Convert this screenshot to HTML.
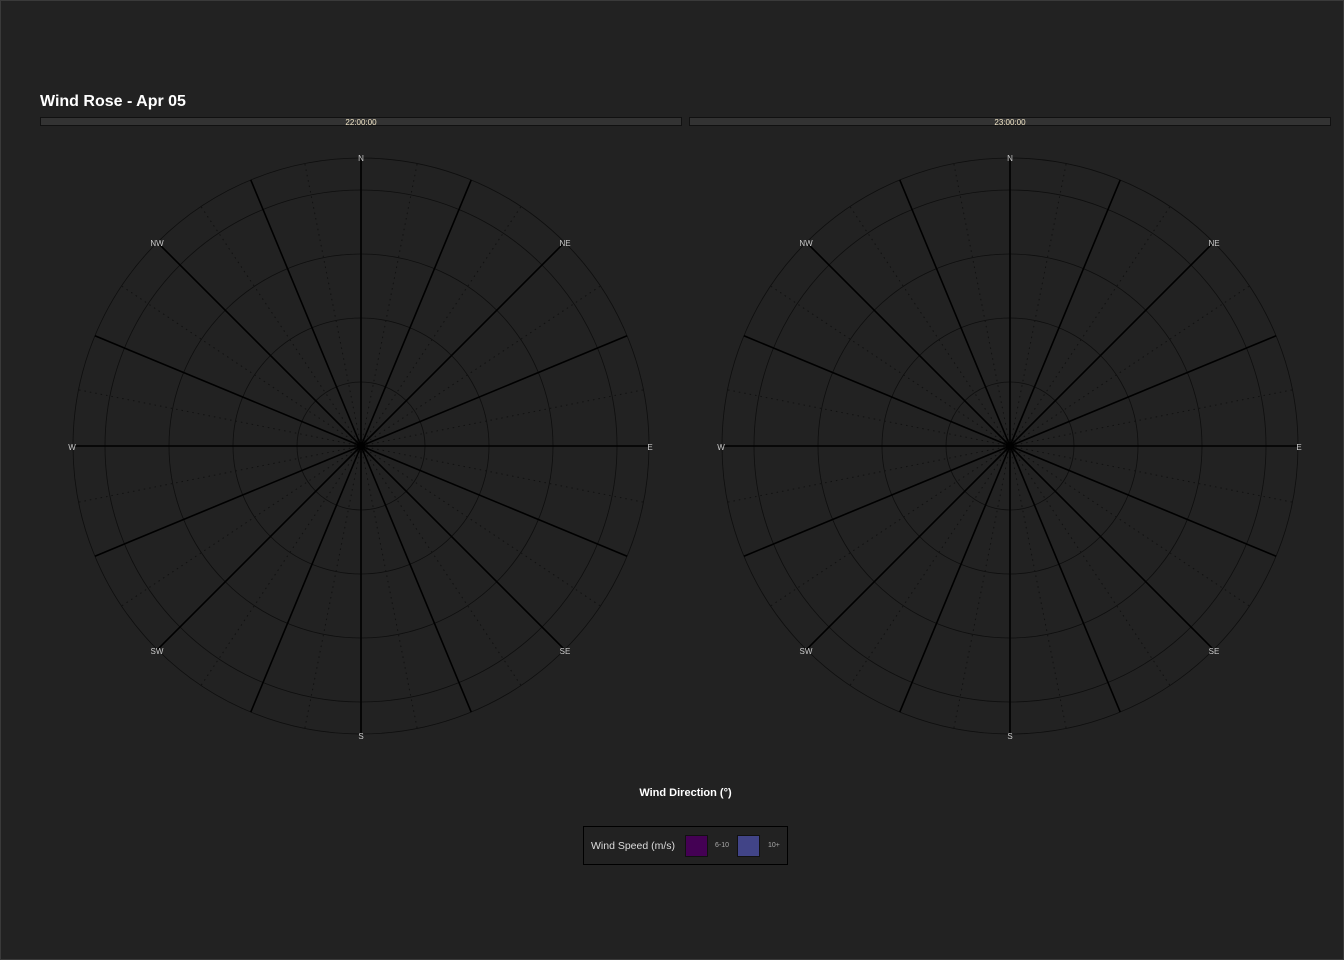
<!DOCTYPE html>
<html><head><meta charset="utf-8"><style>
html,body{margin:0;padding:0}
body{width:1344px;height:960px;background:#222;position:relative;overflow:hidden;font-family:"Liberation Sans",sans-serif;box-shadow:inset 0 0 0 1px #3a3a3a}
.t{position:absolute;left:40px;top:93px;color:#fff;font-weight:bold;font-size:16px}
.bar{position:absolute;top:117px;height:7px;background:#333;border:1px solid #111;color:#f2e6c8;font-size:8px;line-height:9px;text-align:center}
.lg{position:absolute;left:583px;top:826px;width:205px;height:39px;border:1px solid #000;box-sizing:border-box;background:#222}
</style></head><body>
<div class="t">Wind Rose - Apr 05</div>
<div class="bar" style="left:40px;width:640px">22:00:00</div>
<div class="bar" style="left:689px;width:640px">23:00:00</div>
<svg width="1344" height="960" style="position:absolute;left:0;top:0" id="s"></svg>
<div style="position:absolute;left:0;width:1371px;top:787px;text-align:center;color:#fff;font-weight:bold;font-size:11px">Wind Direction (°)</div>
<div class="lg">
<span style="position:absolute;left:7px;top:13px;color:#ddd;font-size:10.5px">Wind Speed (m/s)</span>
<div style="position:absolute;left:101px;top:8px;width:23px;height:22px;background:#440154;border:1px solid #111;box-sizing:border-box"></div>
<span style="position:absolute;left:131px;top:15px;color:#aaa;font-size:7px">6-10</span>
<div style="position:absolute;left:153px;top:8px;width:23px;height:22px;background:#414487;border:1px solid #111;box-sizing:border-box"></div>
<span style="position:absolute;left:184px;top:15px;color:#aaa;font-size:7px">10+</span>
</div>
<script>
var s=document.getElementById('s'),h='';
[[361,446],[1010,446]].forEach(function(c){
 var x=c[0],y=c[1],R=288;
 [64,128,192,256,R].forEach(function(r){h+='<circle cx="'+x+'" cy="'+y+'" r="'+r+'" fill="none" stroke="#0e0e0e" stroke-width="0.8"/>';});
 for(var i=0;i<16;i++){var a=(i*22.5+11.25)*Math.PI/180;h+='<line x1="'+x+'" y1="'+y+'" x2="'+(x+R*Math.sin(a))+'" y2="'+(y-R*Math.cos(a))+'" stroke="#111" stroke-width="1" stroke-dasharray="1.5,4"/>';}
 for(var i=0;i<16;i++){var a=i*22.5*Math.PI/180;h+='<line x1="'+x+'" y1="'+y+'" x2="'+(x+R*Math.sin(a))+'" y2="'+(y-R*Math.cos(a))+'" stroke="#000" stroke-width="1.6"/>';}
 h+='<circle cx="'+x+'" cy="'+y+'" r="4" fill="#000"/>';
 var L=[['N',0,158],['NE',204,243],['E',289,447],['SE',204,651],['S',0,736],['SW',-204,651],['W',-289,447],['NW',-204,243]];
 L.forEach(function(l){h+='<text x="'+(x+l[1])+'" y="'+(l[2]+3)+'" fill="#ccc" font-size="8" text-anchor="middle" font-family="Liberation Sans,sans-serif">'+l[0]+'</text>';});
});
s.innerHTML=h;
</script>
</body></html>
